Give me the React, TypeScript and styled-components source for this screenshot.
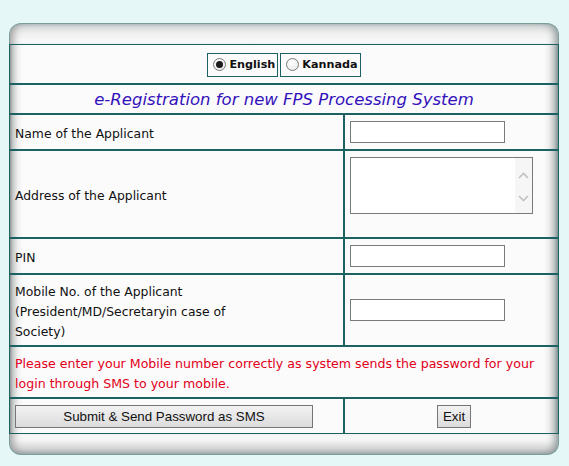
import React from "react";
import styled, { createGlobalStyle } from "styled-components";

const teal = "#1d6262";

const GlobalStyle = createGlobalStyle`
  html, body {
    margin: 0;
    padding: 0;
    background: #e6f7f7;
  }
  body {
    font-family: "DejaVu Sans", Verdana, sans-serif;
  }
`;

const Panel = styled.div`
  width: 550px;
  margin: 23px 0 0 9px;
`;

const Cap = styled.div<{ bottom?: boolean }>`
  height: 20px;
  border: 1px solid #7a9c9c;
  ${({ bottom }) =>
    bottom
      ? `
    border-top: none;
    border-radius: 0 0 12px 12px;
    background: linear-gradient(#ffffff 0, #f2f2f2 35%, #d2d2d2 75%, #a2abab 100%);
  `
      : `
    border-bottom: none;
    border-radius: 12px 12px 0 0;
    background: linear-gradient(#b7c2c2 0, #d9dcdc 3px, #eeeeee 9px, #f8f8f8 16px, #ffffff 100%);
  `}
  box-shadow: inset 9px 0 8px -6px #9a9a9a, inset -9px 0 8px -6px #8a9494;
`;

const Body = styled.div`
  border: 1px solid ${teal};
  background: linear-gradient(
    to right,
    #8e9494 0,
    #c9cbcb 3px,
    #f0f0f0 8px,
    #fbfbfb 13px,
    #fbfbfb calc(100% - 14px),
    #eeeeee calc(100% - 9px),
    #c3c7c7 calc(100% - 4px),
    #7f9292 100%
  );
`;

const Row = styled.div<{ h: number; last?: boolean }>`
  display: flex;
  height: ${({ h }) => h}px;
  border-bottom: ${({ last }) => (last ? "none" : `2px solid ${teal}`)};
`;

const LabelCell = styled.div<{ plain?: boolean }>`
  width: 335px;
  box-sizing: border-box;
  border-right: 2px solid ${teal};
  padding: ${({ plain }) => (plain ? "0 5px" : "4px 5px 0")};
  display: flex;
  align-items: center;
  font-size: 12.4px;
  line-height: 20px;
  color: #111;
`;

const FieldCell = styled.div<{ center?: boolean; top?: boolean }>`
  flex: 1;
  display: flex;
  align-items: ${({ top }) => (top ? "flex-start" : "center")};
  justify-content: ${({ center }) => (center ? "center" : "flex-start")};
  padding: ${({ top }) => (top ? "6px 0 0 5px" : "0 0 0 5px")};
`;

const FullCell = styled.div<{ center?: boolean }>`
  flex: 1;
  display: flex;
  align-items: center;
  justify-content: ${({ center }) => (center ? "center" : "flex-start")};
  padding: 0 5px;
`;

const LangGroup = styled.div`
  display: flex;
  gap: 2px;
  padding-top: 1px;
`;

const LangOption = styled.label`
  display: flex;
  align-items: center;
  gap: 3px;
  height: 24px;
  box-sizing: border-box;
  padding: 0 2px 0 5px;
  border: 1px solid ${teal};
  font-size: 11.2px;
  font-weight: bold;
  color: #111;
`;

const Radio = styled.input`
  appearance: none;
  margin: 0;
  width: 13px;
  height: 13px;
  border-radius: 50%;
  border: 1px solid #7a7a7a;
  background: radial-gradient(circle at 40% 35%, #ffffff, #e4e4e4);
  box-sizing: border-box;
  display: grid;
  place-items: center;
  &:checked::after {
    content: "";
    width: 7px;
    height: 7px;
    border-radius: 50%;
    background: #1a1a1a;
  }
`;

const Title = styled.div`
  flex: 1;
  text-align: center;
  font-style: italic;
  font-size: 16.5px;
  line-height: 30px;
  color: #3311bb;
`;

const Notice = styled.div`
  font-size: 12.6px;
  line-height: 20px;
  padding-top: 4px;
  color: #e2001a;
`;

const TextInput = styled.input`
  width: 155px;
  height: 22px;
  box-sizing: border-box;
  border: 1px solid #7a7a7a;
  background: #fff;
  margin: 0;
  padding: 0 2px;
  outline: none;
`;

const AreaBox = styled.div`
  width: 183px;
  height: 57px;
  box-sizing: border-box;
  border: 1px solid #7a7a7a;
  background: #fff;
  display: flex;
`;

const Area = styled.textarea`
  flex: 1;
  border: none;
  resize: none;
  outline: none;
  margin: 0;
  padding: 2px;
  background: transparent;
`;

const ScrollStrip = styled.div`
  width: 17px;
  background: #f6f6f6;
  display: flex;
  flex-direction: column;
  align-items: center;
  gap: 16px;
  padding-top: 14px;
`;

const Button = styled.button<{ wide?: boolean }>`
  height: 23px;
  width: ${({ wide }) => (wide ? "298px" : "34px")};
  margin: 0;
  padding: 0;
  border: 1px solid #767676;
  border-radius: 0;
  background: linear-gradient(#f2f2f2, #dcdcdc);
  font-family: "Liberation Sans", Arial, sans-serif;
  font-size: 13.33px;
  color: #111;
`;

const Chevron = ({ up }: { up?: boolean }) => (
  <svg width="11" height="7" viewBox="0 0 11 7">
    <path
      d={up ? "M1 6 L5.5 1.5 L10 6" : "M1 1 L5.5 5.5 L10 1"}
      fill="none"
      stroke="#c2c2c2"
      strokeWidth="1.7"
    />
  </svg>
);

export default function App() {
  return (
    <>
      <GlobalStyle />
      <Panel>
        <Cap />
        <Body>
          <Row h={38}>
            <FullCell center>
              <LangGroup>
                <LangOption>
                  <Radio type="radio" name="lang" defaultChecked />
                  English
                </LangOption>
                <LangOption>
                  <Radio type="radio" name="lang" />
                  Kannada
                </LangOption>
              </LangGroup>
            </FullCell>
          </Row>
          <Row h={28}>
            <Title>e-Registration for new FPS Processing System</Title>
          </Row>
          <Row h={34}>
            <LabelCell>Name of the Applicant</LabelCell>
            <FieldCell>
              <TextInput type="text" />
            </FieldCell>
          </Row>
          <Row h={86}>
            <LabelCell>Address of the Applicant</LabelCell>
            <FieldCell top>
              <AreaBox>
                <Area />
                <ScrollStrip>
                  <Chevron up />
                  <Chevron />
                </ScrollStrip>
              </AreaBox>
            </FieldCell>
          </Row>
          <Row h={34}>
            <LabelCell>PIN</LabelCell>
            <FieldCell>
              <TextInput type="text" />
            </FieldCell>
          </Row>
          <Row h={70}>
            <LabelCell>
              Mobile No. of the Applicant
              <br />
              (President/MD/Secretaryin case of
              <br />
              Society)
            </LabelCell>
            <FieldCell>
              <TextInput type="text" />
            </FieldCell>
          </Row>
          <Row h={50}>
            <FullCell>
              <Notice>
                Please enter your Mobile number correctly as system sends the password for your
                <br />
                login through SMS to your mobile.
              </Notice>
            </FullCell>
          </Row>
          <Row h={34} last>
            <LabelCell plain>
              <Button wide>Submit &amp; Send Password as SMS</Button>
            </LabelCell>
            <FieldCell center>
              <Button>Exit</Button>
            </FieldCell>
          </Row>
        </Body>
        <Cap bottom />
      </Panel>
    </>
  );
}
